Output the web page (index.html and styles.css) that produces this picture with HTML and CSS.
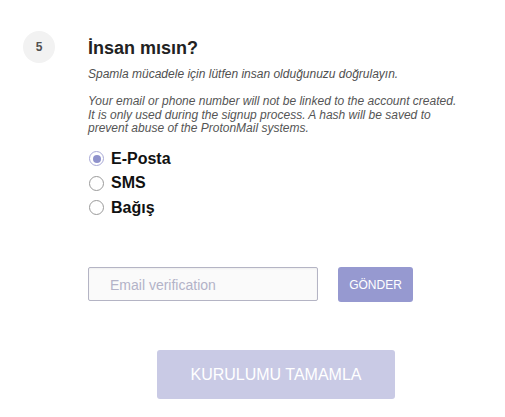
FILE: index.html
```html
<!DOCTYPE html>
<html lang="tr">
<head>
<meta charset="utf-8">
<link rel="stylesheet" href="styles.css">
</head>
<body>
<div class="step">
  <div class="step-num">5</div>
  <div class="step-body">
    <h2 class="title">İnsan mısın?</h2>
    <p class="sub">Spamla mücadele için lütfen insan olduğunuzu doğrulayın.</p>
    <p class="note">Your email or phone number will not be linked to the account created. It is only used during the signup process. A hash will be saved to prevent abuse of the ProtonMail systems.</p>
    <div class="options">
      <label class="opt"><span class="radio checked"></span>E-Posta</label>
      <label class="opt"><span class="radio"></span>SMS</label>
      <label class="opt"><span class="radio"></span>Bağış</label>
    </div>
    <div class="verify">
      <div class="input">Email verification</div>
      <div class="send">GÖNDER</div>
    </div>
  </div>
</div>
<div class="finish-row">
  <div class="finish">KURULUMU TAMAMLA</div>
</div>
</body>
</html>
```
FILE: styles.css
```css
html, body {
  margin: 0;
  padding: 0;
  background: #fff;
  font-family: "Liberation Sans", Arial, sans-serif;
  color: #222;
}
.step {
  display: flex;
  padding: 31px 0 0 23px;
}
.step-num {
  width: 32px;
  height: 32px;
  border-radius: 50%;
  background: #f2f2f2;
  color: #505050;
  font-size: 12px;
  font-weight: bold;
  display: flex;
  align-items: center;
  justify-content: center;
  flex-shrink: 0;
}
.step-body {
  margin-left: 33px;
  width: 372px;
}
.title {
  margin: 6px 0 0;
  font-size: 18px;
  line-height: 22px;
  font-weight: bold;
  color: #222;
}
.sub {
  margin: 8px 0 0;
  font-size: 12px;
  line-height: 14px;
  font-style: italic;
  color: #505050;
}
.note {
  margin: 14px 0 0;
  font-size: 12px;
  line-height: 13.5px;
  font-style: italic;
  color: #555;
}
.options {
  margin-top: 14px;
  display: flex;
  flex-direction: column;
  gap: 6px;
}
.opt {
  display: flex;
  align-items: center;
  font-size: 16px;
  font-weight: bold;
  line-height: 18.5px;
  color: #111;
}
.radio {
  width: 13px;
  height: 13px;
  border: 1px solid #9a9a9a;
  border-radius: 50%;
  margin: 0 7px 0 1px;
  box-sizing: content-box;
  position: relative;
  background: #fff;
}
.radio.checked {
  border-color: #a8a9d6;
}
.radio.checked::after {
  content: "";
  position: absolute;
  left: 2.5px;
  top: 2.5px;
  width: 8px;
  height: 8px;
  border-radius: 50%;
  background: #8f92cc;
}
.verify {
  margin-top: 50px;
  display: flex;
  gap: 20px;
}
.input {
  width: 230px;
  height: 34px;
  box-sizing: border-box;
  border: 1px solid #b4b4c4;
  border-radius: 2px;
  background: #fafafa;
  color: #b3b3c8;
  font-size: 14px;
  padding: 2px 0 0 21px;
  display: flex;
  align-items: center;
  box-shadow: inset 0 1px 2px rgba(0,0,0,0.05);
}
.send {
  width: 75px;
  height: 35px;
  box-sizing: border-box;
  border-radius: 3px;
  background: #9699d0;
  color: #fff;
  font-size: 12px;
  display: flex;
  align-items: center;
  justify-content: center;
}
.finish-row {
  padding: 48px 0 0 157px;
}
.finish {
  width: 238px;
  height: 49px;
  border-radius: 3px;
  background: #c9cae5;
  color: #fff;
  font-size: 16px;
  display: flex;
  align-items: center;
  justify-content: center;
}
```
